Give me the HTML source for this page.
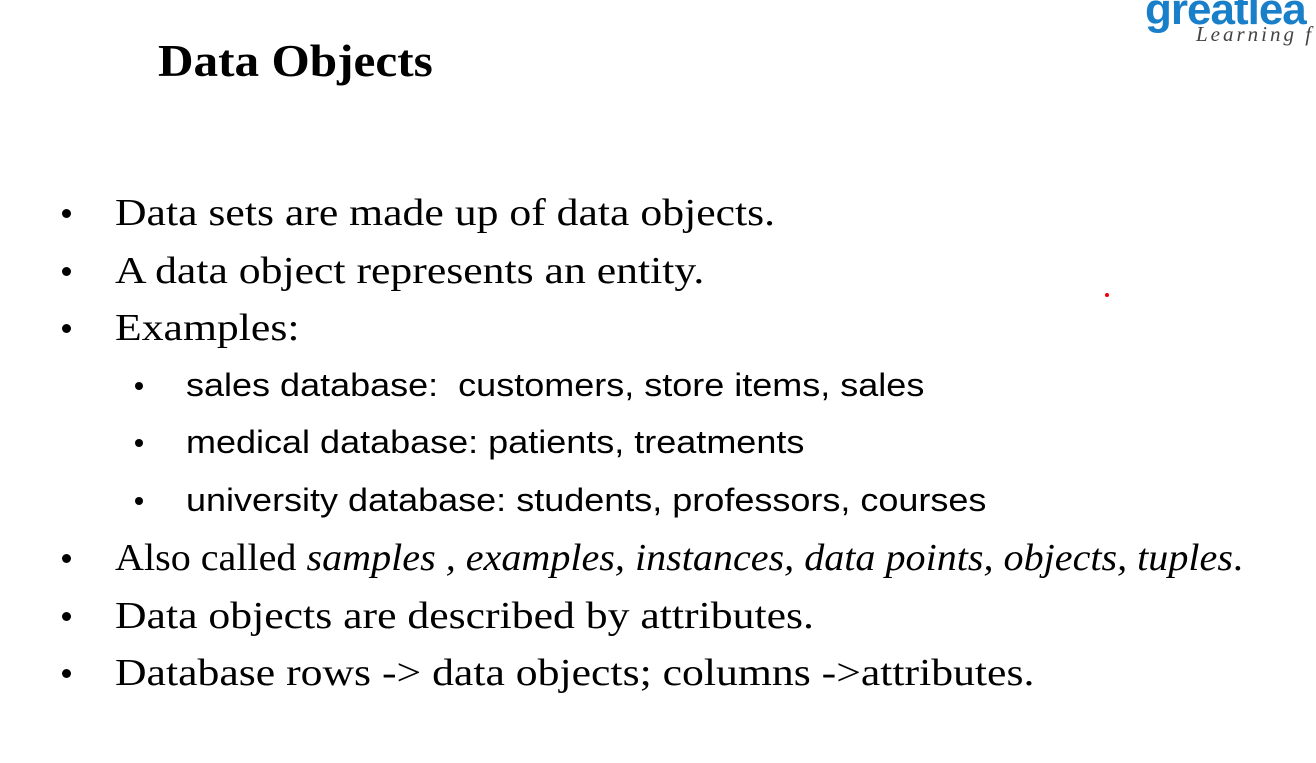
<!DOCTYPE html>
<html><head><style>
body{margin:0;width:1316px;height:763px;background:#fff;position:relative;overflow:hidden;font-family:"Liberation Serif",serif;color:#000}
.t{position:absolute;white-space:nowrap;line-height:1;transform-origin:0 50%}
.s{font-size:38px;transform:scaleX(1.15)}
.ss{font-family:"Liberation Sans",sans-serif;font-size:32px;transform:scaleX(1.125)}
.d{position:absolute;width:9px;height:9px;border-radius:50%;background:#000}
.e{position:absolute;width:8px;height:8px;border-radius:50%;background:#000}
</style></head><body>
<div class="t" style="left:158px;top:38px;font-size:46px;font-weight:bold;transform:scaleX(1.07)">Data Objects</div>
<div class="t" style="left:1145px;top:-12px;font-family:'Liberation Sans',sans-serif;font-weight:bold;font-size:44px;color:#1a7fc9;letter-spacing:-1px">greatlea</div>
<div class="t" style="left:1196px;top:24px;font-size:21px;font-style:italic;color:#444;letter-spacing:3px">Learning f</div>

<div class="d" style="left:62px;top:209px"></div>
<div class="t s" style="left:115px;top:194px">Data sets are made up of data objects.</div>
<div class="d" style="left:62px;top:267px"></div>
<div class="t s" style="left:115px;top:252px">A data object represents an entity.</div>
<div class="d" style="left:62px;top:324px"></div>
<div class="t s" style="left:115px;top:309px">Examples:</div>

<div class="e" style="left:135px;top:382px"></div>
<div class="t ss" style="left:186px;top:369px">sales database:&nbsp; customers, store items, sales</div>
<div class="e" style="left:135px;top:439px"></div>
<div class="t ss" style="left:186px;top:426px">medical database: patients, treatments</div>
<div class="e" style="left:135px;top:497px"></div>
<div class="t ss" style="left:186px;top:484px">university database: students, professors, courses</div>

<div class="d" style="left:62px;top:554px"></div>
<div class="t" style="left:115px;top:539px;font-size:38px;transform:scaleX(1.055)">Also called <i>samples , examples, instances, data points, objects, tuples</i>.</div>
<div class="d" style="left:62px;top:612px"></div>
<div class="t s" style="left:115px;top:597px">Data objects are described by attributes.</div>
<div class="d" style="left:62px;top:669px"></div>
<div class="t s" style="left:115px;top:654px">Database rows -&gt; data objects; columns -&gt;attributes.</div>
<div style="position:absolute;left:1105px;top:293px;width:4px;height:4px;border-radius:50%;background:#e00"></div>
</body></html>
